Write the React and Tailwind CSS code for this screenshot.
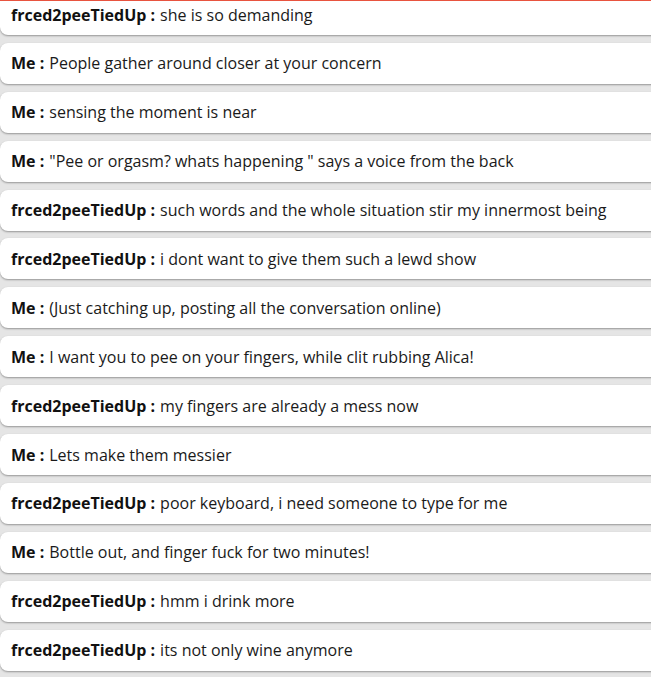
import React from "react";

const messages = [
  { from: "frced2peeTiedUp", text: "she is so demanding" },
  { from: "Me", text: "People gather around closer at your concern" },
  { from: "Me", text: "sensing the moment is near" },
  { from: "Me", text: "\"Pee or orgasm? whats happening \" says a voice from the back" },
  { from: "frced2peeTiedUp", text: "such words and the whole situation stir my innermost being" },
  { from: "frced2peeTiedUp", text: "i dont want to give them such a lewd show" },
  { from: "Me", text: "(Just catching up, posting all the conversation online)" },
  { from: "Me", text: "I want you to pee on your fingers, while clit rubbing Alica!" },
  { from: "frced2peeTiedUp", text: "my fingers are already a mess now" },
  { from: "Me", text: "Lets make them messier" },
  { from: "frced2peeTiedUp", text: "poor keyboard, i need someone to type for me" },
  { from: "Me", text: "Bottle out, and finger fuck for two minutes!" },
  { from: "frced2peeTiedUp", text: "hmm i drink more" },
  { from: "frced2peeTiedUp", text: "its not only wine anymore" },
];

export default function App() {
  return (
    <div className="h-[677px] overflow-hidden bg-[#e5e5e5] border-t border-[#e8533f]" style={{ fontFamily: '"Open Sans", sans-serif' }}>
      <div className="-mt-[7px] flex flex-col gap-[7.9px] mr-[-12px]">
        {messages.map((m, i) => (
          <div
            key={i}
            className="h-[41px] flex items-center px-[11px] bg-white rounded-lg shadow-[0_1px_2px_rgba(0,0,0,0.35)] text-[16px] text-[#1a1a1a] whitespace-nowrap"
          >
            <span className="font-bold text-[#111]">{m.from} :</span>
            <span className="ml-[5px]">{m.text}</span>
          </div>
        ))}
      </div>
    </div>
  );
}
